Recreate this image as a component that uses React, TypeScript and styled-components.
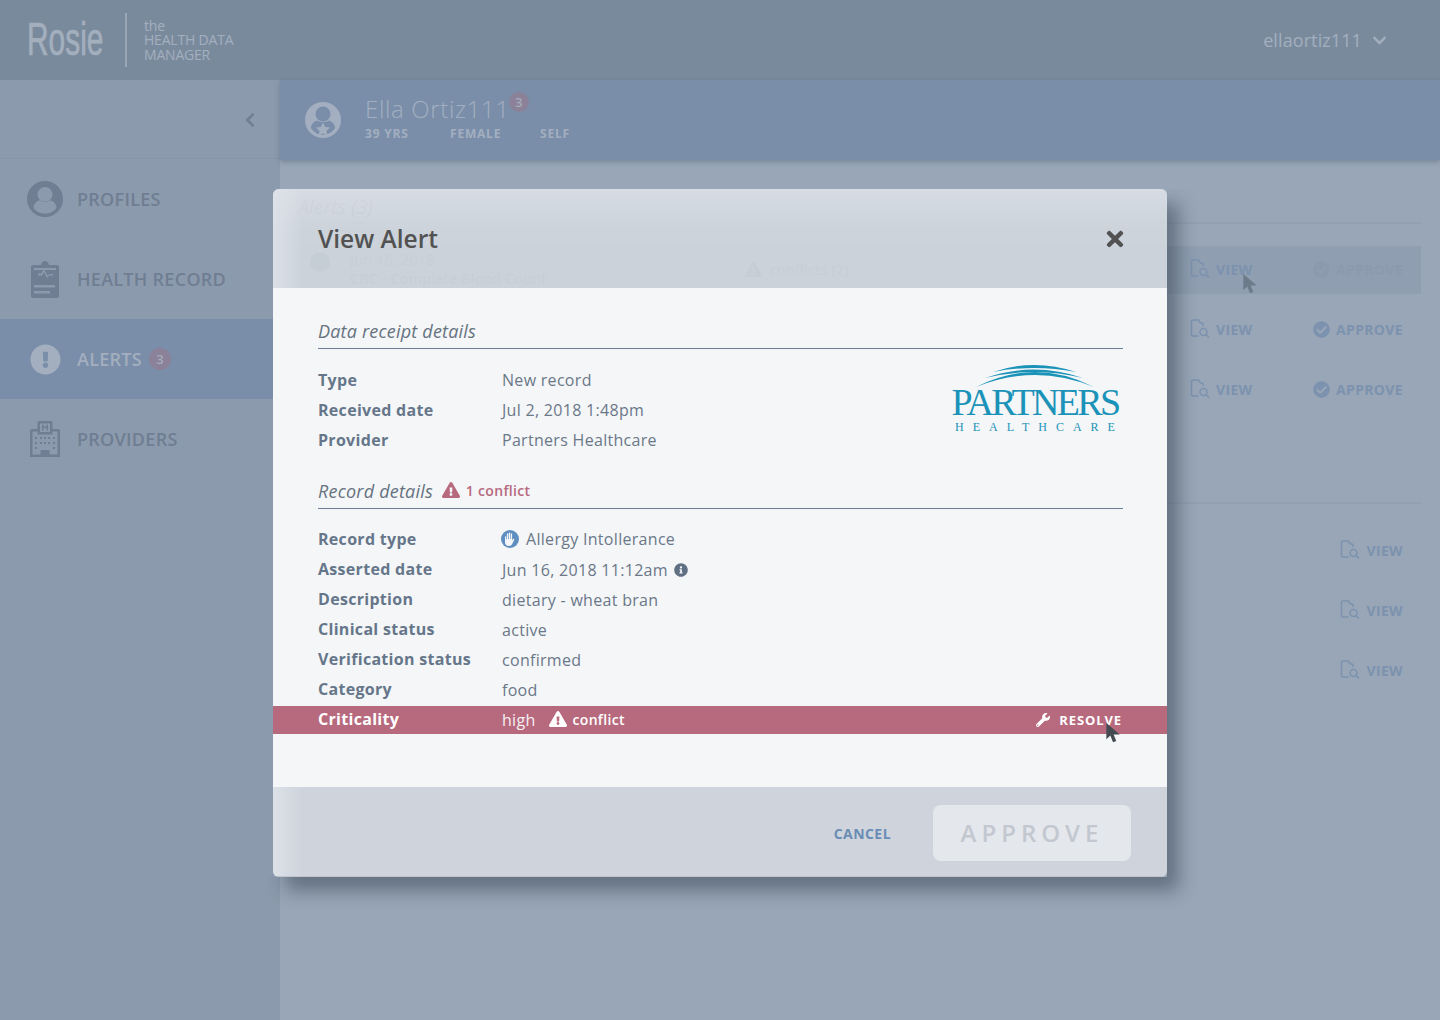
import React from "react";
import styled, {createGlobalStyle} from "styled-components";
import {
    FaChevronDown,
    FaChevronLeft,
    FaCheckCircle,
    FaExclamationCircle,
    FaExclamationTriangle,
    FaInfoCircle,
    FaTimes,
    FaWrench,
} from "react-icons/fa";

const GlobalStyle = createGlobalStyle`
    html, body {
        margin: 0;
        padding: 0;
        background: #98a6b7;
        font-family: "Open Sans", "Liberation Sans", sans-serif;
    }
`;

const Page = styled.div`
    position: relative;
    display: flex;
    flex-direction: column;
    width: 1440px;
    height: 1020px;
    overflow: hidden;
`;

const TopBar = styled.header`
    display: flex;
    align-items: center;
    height: 80px;
    padding: 0 53px 0 27px;
    box-sizing: border-box;
    background: #7a8a9d;
    color: #a3afbd;
`;

const LogoWord = styled.div`
    width: 76px;
    margin-top: -2px;
    font-family: "Liberation Sans", sans-serif;
    font-size: 46px;
    font-weight: 400;
    line-height: 54px;
    white-space: nowrap;
    -webkit-text-stroke: 0.7px #a3afbd;
    transform: scaleX(0.65);
    transform-origin: left center;
`;

const LogoDivider = styled.div`
    width: 2px;
    height: 54px;
    margin: 0 17px 0 22px;
    background: #9aa6b5;
`;

const Tagline = styled.div`
    flex: 1;
    font-size: 14px;
    line-height: 14.5px;
    letter-spacing: -0.2px;
    padding-top: 1px;
`;

const UserMenu = styled.div`
    display: flex;
    align-items: center;
    gap: 10px;
    font-size: 18px;
    letter-spacing: 0.1px;
`;

const Body = styled.div`
    display: flex;
    flex: 1;
`;

const Sidebar = styled.nav`
    width: 280px;
    background: #8c9aad;
`;

const CollapseRow = styled.div`
    display: flex;
    align-items: center;
    justify-content: flex-end;
    height: 76px;
    padding: 2px 22px 0 0;
    border-bottom: 1px solid #8695a8;
    color: #6f7e92;
    font-size: 16px;
`;

const NavItem = styled.div<{$active?: boolean}>`
    display: flex;
    align-items: center;
    gap: 14px;
    height: 80px;
    padding-left: 27px;
    background: ${p => p.$active ? "#7a8ea9" : "transparent"};
    color: ${p => p.$active ? "#a3afbf" : "#6f7e92"};
    font-size: 18px;
    font-weight: 600;
    letter-spacing: 0.28px;
`;

const NavIcon = styled.div`
    display: flex;
    align-items: center;
    justify-content: center;
    width: 36px;
    height: 36px;
    font-size: 36px;
`;

const Badge = styled.span<{$size: number}>`
    display: inline-flex;
    align-items: center;
    justify-content: center;
    flex: none;
    width: ${p => p.$size}px;
    height: ${p => p.$size}px;
    border-radius: 50%;
    background: #8b8198;
    color: #a5acba;
    font-size: 13px;
    font-weight: 600;
`;

const NavBadge = styled(Badge)`
    margin-left: -7px;
`;

const Main = styled.main`
    display: flex;
    flex-direction: column;
    flex: 1;
`;

const PatientBar = styled.div`
    display: flex;
    align-items: center;
    gap: 24px;
    height: 80px;
    padding-left: 25px;
    background: #7a8ea9;
    box-shadow: 0 2px 5px rgba(80, 95, 115, 0.45);
    color: #a3afc0;
`;

const PatientInfo = styled.div`
    padding-bottom: 5px;
`;

const PatientName = styled.div`
    display: flex;
    font-size: 24px;
    font-weight: 300;
    line-height: 30px;
    letter-spacing: 0.65px;
`;

const NameBadge = styled(Badge)`
    margin: -2px 0 0 -1px;
    letter-spacing: 0;
`;

const PatientFacts = styled.div`
    display: flex;
    margin-top: 1px;
    font-size: 12px;
    font-weight: 700;
    letter-spacing: 0.8px;
`;

const Fact = styled.span<{$width: number}>`
    width: ${p => p.$width}px;
`;

const AlertList = styled.section`
    flex: 1;
    padding: 35px 19px 0 18px;
`;

const ListTitle = styled.div`
    height: 27px;
    border-bottom: 2px solid #92a0b2;
    color: #708093;
    font-size: 19.5px;
    font-style: italic;
    line-height: 24px;
`;

const ListDivider = styled.div`
    height: 2px;
    margin-top: 88px;
    background: #92a0b2;
`;

const AlertRows = styled.div<{$gap: number}>`
    display: flex;
    flex-direction: column;
    gap: 12px;
    margin-top: ${p => p.$gap}px;
`;

const AlertRow = styled.div<{$hover?: boolean}>`
    display: flex;
    align-items: center;
    justify-content: flex-end;
    height: 46px;
    padding: 0 18px 2px 0;
    background: ${p => p.$hover ? "#8f9eb1" : "transparent"};
`;

const RowSummary = styled.div`
    display: flex;
    flex: 1;
    align-items: center;
    padding-left: 12px;
    color: #7a8a9d;
    font-size: 14px;
`;

const RowBadge = styled.div`
    width: 20px;
    height: 20px;
    margin: -14px 20px 0 0;
    border-radius: 50%;
    background: #7a8a9d;
`;

const RowText = styled.div`
    width: 395px;
    line-height: 19px;
    letter-spacing: 0.4px;
`;

const RowConflicts = styled.div`
    display: flex;
    align-items: center;
    gap: 8px;
    letter-spacing: 0.4px;
`;

const RowAction = styled.div<{$width?: number; $muted?: boolean}>`
    display: flex;
    align-items: center;
    gap: 6px;
    width: ${p => p.$width ? `${p.$width}px` : "auto"};
    color: ${p => p.$muted ? "#8b9aad" : "#7c92ae"};
    font-size: 14px;
    font-weight: 700;
    letter-spacing: 0.35px;
`;

const Cursor = styled.svg<{$x: number; $y: number; $color: string}>`
    position: absolute;
    left: ${p => p.$x}px;
    top: ${p => p.$y}px;
    width: 15px;
    height: 20px;
    fill: ${p => p.$color};
`;

const Overlay = styled.div`
    position: absolute;
    inset: 0;
    display: flex;
    justify-content: center;
    padding-top: 189px;
    box-sizing: border-box;
`;

const Modal = styled.div`
    position: relative;
    display: flex;
    flex-direction: column;
    width: 894px;
    height: 688px;
    border-radius: 6px;
    overflow: hidden;
`;

const ModalShadow = styled.div`
    position: absolute;
    left: 273px;
    top: 189px;
    width: 894px;
    height: 688px;
    border-radius: 6px;
    box-shadow: 12px 14px 18px rgba(40, 50, 65, 0.45);
    clip-path: polygon(894px 0, 960px 0, 960px 760px, -20px 760px, -20px 688px, 894px 688px);
`;

const ModalHeader = styled.div`
    display: flex;
    align-items: center;
    justify-content: space-between;
    height: 99px;
    padding: 0 44px 0 45px;
    box-sizing: border-box;
    background:
        linear-gradient(90deg, rgba(225, 229, 236, 0.75) 0, rgba(225, 229, 236, 0) 30px),
        linear-gradient(180deg, rgba(225, 229, 236, 0.5) 0, rgba(225, 229, 236, 0) 40px),
        rgba(218, 222, 228, 0.8);
    color: #525252;
`;

const ModalTitle = styled.h2`
    margin: 0;
    font-size: 24.5px;
    font-weight: 600;
    line-height: 32px;
`;

const CloseIcon = styled(FaTimes)`
    margin: 1px -4px 0 0;
    font-size: 24px;
`;

const ModalBody = styled.div`
    flex: 1;
    padding-top: 31px;
    background: #f4f6f8;
`;

const SectionHead = styled.div<{$spaced?: boolean}>`
    display: flex;
    align-items: flex-start;
    gap: 9px;
    height: 29px;
    margin: ${p => p.$spaced ? "24px" : "0"} 44px 0 45px;
    border-bottom: 1px solid #6b7f99;
`;

const SectionTitle = styled.span`
    color: #66727f;
    font-size: 18px;
    font-style: italic;
    letter-spacing: 0.2px;
    line-height: 24px;
`;

const ConflictNote = styled.span`
    display: flex;
    align-items: center;
    gap: 6px;
    height: 24px;
    margin-top: -1px;
    color: #b7697e;
    font-size: 14px;
    font-weight: 600;
    letter-spacing: 0.3px;
`;

const DetailBlock = styled.div<{$top: number}>`
    position: relative;
    padding-top: ${p => p.$top}px;
`;

const DetailRow = styled.div<{$alert?: boolean; $tall?: boolean}>`
    display: flex;
    align-items: center;
    box-sizing: border-box;
    height: ${p => p.$alert ? "28px" : p.$tall ? "31px" : "30px"};
    margin-top: ${p => p.$alert ? "1px" : "0"};
    padding: 0 45px ${p => p.$tall ? "2px" : "0"};
    background: ${p => p.$alert ? "#b7697e" : "transparent"};
    color: ${p => p.$alert ? "#f7f0f2" : "#6b7888"};
    font-size: 16px;
    letter-spacing: 0.3px;
`;

const DetailLabel = styled.div<{$alert?: boolean; $level?: boolean}>`
    width: 184px;
    margin-top: ${p => p.$level ? "0" : "-2px"};
    color: ${p => p.$alert ? "#ffffff" : "#66768a"};
    font-weight: 700;
`;

const DetailValue = styled.div`
    display: flex;
    align-items: center;
    flex: 1;
    gap: 7px;

    & > svg:first-child {
        margin-left: -1px;
    }
`;

const InfoIcon = styled(FaInfoCircle)`
    margin-left: 2px;
    color: #5f6f84;
    font-size: 14px;
`;

const RowConflict = styled.span`
    display: flex;
    align-items: center;
    gap: 6px;
    margin: -2px 0 0 6px;
    color: #ffffff;
    font-size: 14px;
    font-weight: 600;
`;

const ResolveLink = styled.span`
    display: flex;
    align-items: center;
    gap: 9px;
    margin-top: -1px;
    color: #ffffff;
    font-size: 13px;
    font-weight: 700;
    letter-spacing: 0.9px;
`;

const PartnersLogo = styled.div`
    position: absolute;
    right: 47px;
    top: 16px;
    display: flex;
    flex-direction: column;
    align-items: center;
    width: 170px;
    color: #1b93b8;
`;

const PartnersArc = styled.svg`
    width: 118px;
    height: 23px;
    margin-bottom: -3px;
    fill: currentColor;
    overflow: visible;
`;

const PartnersName = styled.div`
    font-family: "Liberation Serif", serif;
    font-size: 38px;
    line-height: 34px;
    letter-spacing: -2.7px;
    white-space: nowrap;
`;

const PartnersSub = styled.div`
    margin-top: 1px;
    padding-left: 9px;
    font-family: "Liberation Serif", serif;
    font-size: 12px;
    letter-spacing: 9px;
    white-space: nowrap;
`;

const ModalFooter = styled.div`
    display: flex;
    align-items: center;
    justify-content: flex-end;
    gap: 42px;
    height: 90px;
    padding: 2px 36px 0 0;
    box-sizing: border-box;
    border-bottom: 1px solid #c0c5cd;
    background:
        linear-gradient(90deg, rgba(225, 229, 236, 0.75) 0, rgba(225, 229, 236, 0) 30px),
        #cfd4dc;
`;

const CancelButton = styled.span`
    margin-top: 2px;
    color: #6a8db5;
    font-size: 14px;
    font-weight: 700;
    letter-spacing: 0.45px;
`;

const ApproveButton = styled.div`
    display: flex;
    align-items: center;
    justify-content: center;
    width: 198px;
    height: 56px;
    border-radius: 8px;
    background: #e4e7ec;
    color: #c3c8d0;
    font-size: 24px;
    font-weight: 600;
    letter-spacing: 5px;
`;

const ProfileIcon: React.FC = () => (
    <svg width="36" height="36" viewBox="0 0 36 36" fill="currentColor">
        <path fillRule="evenodd" d="M18 0a18 18 0 1 0 0 36a18 18 0 0 0 0-36zM18 6a7.500 7.500 0 0 1 7.500 7.500a7.500 7.500 0 0 1-15 0A7.500 7.500 0 0 1 18 6zM18 32.500c-4.800 0-9-2.200-11.500-5.600c0-4.200 3.500-6.900 6.700-7.900c1.300.9 3 1.500 4.800 1.500s3.500-.6 4.800-1.500c3.200 1 6.700 3.700 6.700 7.900C27 30.300 22.800 32.500 18 32.500z" />
    </svg>
);

const PatientIcon: React.FC = () => (
    <svg width="36" height="36" viewBox="0 0 36 36">
        <circle cx="18" cy="18" r="18" fill="#a3afc0" />
        <circle cx="18" cy="12" r="7.500" fill="#7a8ea9" />
        <path fill="#7a8ea9" d="M6 26c0-4 3-6.500 6.200-7.500c1.500 1 3.600 1.600 5.800 1.600s4.300-.6 5.800-1.600c3.200 1 6.200 3.500 6.200 7.500c-2.500 4-7 6.800-12 6.800S8.500 30 6 26z" />
        <path fill="#a3afc0" d="M18 20.500l2.200 4.400l4.800.7l-3.500 3.300l.8 4.800l-4.300-2.300l-4.300 2.300l.8-4.800l-3.500-3.300l4.800-.7z" />
    </svg>
);

const ClipboardIcon: React.FC = () => (
    <svg width="28" height="37" viewBox="0 0 28 37" fill="currentColor">
        <path fillRule="evenodd" d="M2 4h8c.5-2.500 2-4 4-4s3.500 1.500 4 4h8c1.100 0 2 .9 2 2v29c0 1.100-.9 2-2 2H2c-1.100 0-2-.9-2-2V6c0-1.100.9-2 2-2zM3 7v2h22V7zM3 24v2.500h21V24zM3 30v2.500h16V30zM7 14.500h4l2-3.500l3 6l2-2.500h4v-1.500h-3.300l-2.300 1.500l-3.400-6.500l-2.700 4.500H7z" />
    </svg>
);

const HospitalIcon: React.FC = () => (
    <svg width="30" height="36" viewBox="0 0 30 36" fill="currentColor">
        <path fillRule="evenodd" d="M9 0h12a1.500 1.500 0 0 1 1.500 1.500V8H28a2 2 0 0 1 2 2v26H0V10a2 2 0 0 1 2-2h5.500V1.500A1.500 1.500 0 0 1 9 0zM10 2.500V11h10V2.500zM2.500 10.500v23h8V29h9v4.500h8v-23h-5V13.500h-15v-3z" />
        <path d="M12 3.500h1.500v2h3v-2H18v6h-1.500v-2.500h-3v2.500H12z" />
        <path d="M5 16h2v2H5zM10 16h2v2h-2zM14 16h2v2h-2zM18 16h2v2h-2zM23 16h2v2h-2zM5 21h2v2H5zM10 21h2v2h-2zM14 21h2v2h-2zM18 21h2v2h-2zM23 21h2v2h-2zM5 26h2v2H5zM23 26h2v2h-2z" />
    </svg>
);

const DocSearchIcon: React.FC = () => (
    <svg width="20" height="20" viewBox="0 0 20 20" fill="none" stroke="currentColor" strokeWidth="1.500">
        <path d="M8.500 17H3c-1 0-1.500-.6-1.500-1.500V2.500C1.500 1.600 2 1 3 1h5.500c.5 2 1.500 3.200 4.500 3.500V7" />
        <circle cx="13.500" cy="13" r="3.500" />
        <path d="M16 15.500l3 3" />
    </svg>
);

const HandBadgeIcon: React.FC = () => (
    <svg width="18" height="18" viewBox="0 0 18 18">
        <circle cx="9" cy="9" r="9" fill="#5f8fc0" />
        <path fill="#f4f6f8" d="M4 7c0-1 1.300-1 1.300 0v2.500h.6V4c0-1 1.300-1 1.300 0v5h.6V3.200c0-1 1.400-1 1.400 0V9h.6V4c0-1 1.300-1 1.300 0v6.300l1-1.300c.7-.8 1.700 0 1.100.8l-1.900 4c-.7 1.300-1.700 2.300-3.300 2.300c-2.600 0-4-1.500-4-4z" />
    </svg>
);

const CursorShape: React.FC<{x: number; y: number; color: string}> = ({x, y, color}) => (
    <Cursor $x={x} $y={y} $color={color} viewBox="0 0 15 21">
        <path d="M0 0v17l4.200-3.800l2.800 7l3.400-1.400l-2.800-6.800H14z" />
    </Cursor>
);

const ViewAction: React.FC<{width?: number}> = ({width}) => (
    <RowAction $width={width}>
        <DocSearchIcon />
        VIEW
    </RowAction>
);

const ApproveAction: React.FC<{muted?: boolean}> = ({muted}) => (
    <RowAction $muted={muted}>
        <FaCheckCircle size={17} />
        APPROVE
    </RowAction>
);

const receiptRows = [
    ["Type", "New record"],
    ["Received date", "Jul 2, 2018 1:48pm"],
    ["Provider", "Partners Healthcare"],
];

const plainRecordRows = [
    ["Description", "dietary - wheat bran"],
    ["Clinical status", "active"],
    ["Verification status", "confirmed"],
    ["Category", "food"],
];

export default function App() {
    return (
        <Page>
            <GlobalStyle />

            <TopBar>
                <LogoWord>Rosie</LogoWord>
                <LogoDivider />
                <Tagline>the<br />HEALTH DATA<br />MANAGER</Tagline>
                <UserMenu>ellaortiz111 <FaChevronDown size={15} /></UserMenu>
            </TopBar>

            <Body>
                <Sidebar>
                    <CollapseRow><FaChevronLeft /></CollapseRow>
                    <NavItem><NavIcon><ProfileIcon /></NavIcon>PROFILES</NavItem>
                    <NavItem><NavIcon><ClipboardIcon /></NavIcon>HEALTH RECORD</NavItem>
                    <NavItem $active><NavIcon><FaExclamationCircle size={31} /></NavIcon>ALERTS<NavBadge $size={22}>3</NavBadge></NavItem>
                    <NavItem><NavIcon><HospitalIcon /></NavIcon>PROVIDERS</NavItem>
                </Sidebar>

                <Main>
                    <PatientBar>
                        <PatientIcon />
                        <PatientInfo>
                            <PatientName>Ella Ortiz111<NameBadge $size={20}>3</NameBadge></PatientName>
                            <PatientFacts>
                                <Fact $width={85}>39 YRS</Fact>
                                <Fact $width={90}>FEMALE</Fact>
                                <Fact $width={40}>SELF</Fact>
                            </PatientFacts>
                        </PatientInfo>
                    </PatientBar>

                    <AlertList>
                        <ListTitle>Alerts (3)</ListTitle>
                        <AlertRows $gap={22}>
                            <AlertRow $hover>
                                <RowSummary>
                                    <RowBadge />
                                    <RowText>Jun 16, 2018<br />CBC - Complete Blood Count</RowText>
                                    <RowConflicts><FaExclamationTriangle size={17} />conflicts (2)</RowConflicts>
                                </RowSummary>
                                <ViewAction width={123} />
                                <ApproveAction muted />
                            </AlertRow>
                            <AlertRow><ViewAction width={123} /><ApproveAction /></AlertRow>
                            <AlertRow><ViewAction width={123} /><ApproveAction /></AlertRow>
                        </AlertRows>
                        <ListDivider />
                        <AlertRows $gap={23}>
                            <AlertRow><ViewAction /></AlertRow>
                            <AlertRow><ViewAction /></AlertRow>
                            <AlertRow><ViewAction /></AlertRow>
                        </AlertRows>
                    </AlertList>
                </Main>
            </Body>

            <CursorShape x={1243} y={274} color="#6d7a8a" />
            <ModalShadow />

            <Overlay>
                <Modal>
                    <ModalHeader>
                        <ModalTitle>View Alert</ModalTitle>
                        <CloseIcon />
                    </ModalHeader>

                    <ModalBody>
                        <SectionHead><SectionTitle>Data receipt details</SectionTitle></SectionHead>
                        <DetailBlock $top={16}>
                            {receiptRows.map(([label, value]) => (
                                <DetailRow key={label}>
                                    <DetailLabel $level>{label}</DetailLabel>
                                    <DetailValue>{value}</DetailValue>
                                </DetailRow>
                            ))}
                            <PartnersLogo>
                                <PartnersArc viewBox="0 0 118 23">
                                    <path d="M0 22Q59 -8 118 22Q59 -2 0 22z" />
                                    <path d="M9 13Q58 -4 107 13Q58 1 9 13z" />
                                    <path d="M17 7Q58 -7 100 7Q58 -1 17 7z" />
                                </PartnersArc>
                                <PartnersName>PARTNERS</PartnersName>
                                <PartnersSub>HEALTHCARE</PartnersSub>
                            </PartnersLogo>
                        </DetailBlock>

                        <SectionHead $spaced>
                            <SectionTitle>Record details</SectionTitle>
                            <ConflictNote><FaExclamationTriangle size={18} />1 conflict</ConflictNote>
                        </SectionHead>
                        <DetailBlock $top={15}>
                            <DetailRow $tall>
                                <DetailLabel $level>Record type</DetailLabel>
                                <DetailValue><HandBadgeIcon />Allergy Intollerance</DetailValue>
                            </DetailRow>
                            <DetailRow>
                                <DetailLabel>Asserted date</DetailLabel>
                                <DetailValue>Jun 16, 2018 11:12am <InfoIcon /></DetailValue>
                            </DetailRow>
                            {plainRecordRows.map(([label, value]) => (
                                <DetailRow key={label}>
                                    <DetailLabel>{label}</DetailLabel>
                                    <DetailValue>{value}</DetailValue>
                                </DetailRow>
                            ))}
                            <DetailRow $alert>
                                <DetailLabel $alert>Criticality</DetailLabel>
                                <DetailValue>
                                    high
                                    <RowConflict><FaExclamationTriangle size={18} />conflict</RowConflict>
                                </DetailValue>
                                <ResolveLink><FaWrench size={14} />RESOLVE</ResolveLink>
                            </DetailRow>
                        </DetailBlock>
                    </ModalBody>

                    <ModalFooter>
                        <CancelButton>CANCEL</CancelButton>
                        <ApproveButton>APPROVE</ApproveButton>
                    </ModalFooter>
                </Modal>
            </Overlay>

            <CursorShape x={1106} y={723} color="#444a52" />
        </Page>
    );
}
